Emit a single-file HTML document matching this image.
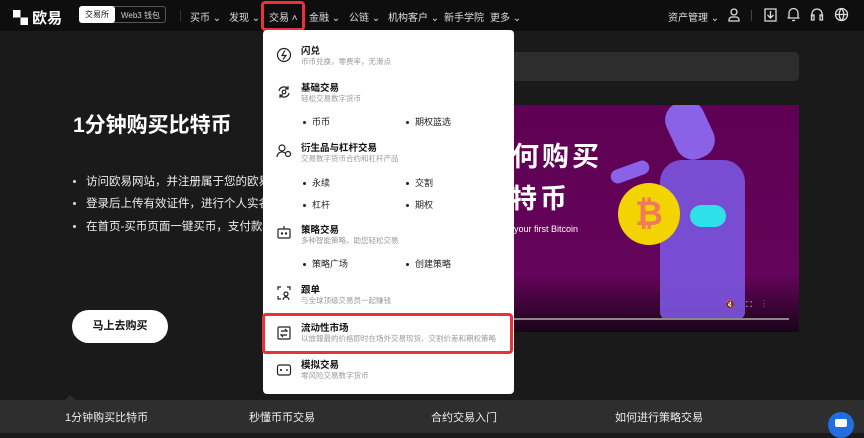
<!DOCTYPE html><html><head><meta charset="utf-8"><style>
*{margin:0;padding:0;box-sizing:border-box}
body{width:864px;height:433px;overflow:hidden;background:#1a1a1a;font-family:"Liberation Sans","Noto Sans CJK SC",sans-serif;color:#fff;position:relative}
.a{position:absolute;white-space:nowrap}
.hdr{position:absolute;left:0;top:0;width:864px;height:31px;background:#0e0e0e}
.nav{font-size:10px;color:#ddd;top:9px}
.dd{position:absolute;left:263px;top:30px;width:251px;height:364px;background:#fff;border-radius:4px}
.t{font-size:9.5px;color:#111;font-weight:bold;position:absolute;left:38px}
.s{font-size:7.5px;color:#999;position:absolute;left:38px}
.b{font-size:9px;color:#222;position:absolute}
.b:before{content:"";display:inline-block;width:3px;height:3px;border-radius:50%;background:#222;margin-right:6px;vertical-align:middle}
.ic{position:absolute;left:13px;width:16px;height:16px}
.li{font-size:11.5px;color:#eee;left:86px}
.dot{position:absolute;left:73px;width:3px;height:3px;border-radius:50%;background:#ddd}
</style></head><body>
<div class="hdr"></div>
<div class="a" style="left:13px;top:7px;font-size:15px;font-weight:bold">▚ 欧易</div>
<div class="a" style="left:79px;top:6px;width:87px;height:17px;border:1px solid #555;border-radius:3px"></div>
<div class="a" style="left:79px;top:6px;width:36px;height:17px;background:#fff;border-radius:3px;color:#111;font-size:8px;line-height:17px;text-align:center">交易所</div>
<div class="a" style="left:121px;top:10px;font-size:8px;color:#ccc">Web3 钱包</div>
<div class="a" style="left:180px;top:10px;width:1px;height:11px;background:#333"></div>
<div class="a nav" style="left:190px">买币 ⌄</div>
<div class="a nav" style="left:229px">发现 ⌄</div>
<div class="a nav" style="left:269px">交易 ˄</div>
<div class="a" style="left:261px;top:1px;width:44px;height:30px;border:3px solid #e8323c;border-radius:4px"></div>
<div class="a nav" style="left:309px">金融 ⌄</div>
<div class="a nav" style="left:349px">公链 ⌄</div>
<div class="a nav" style="left:388px">机构客户 ⌄</div>
<div class="a nav" style="left:444px">新手学院</div>
<div class="a nav" style="left:490px">更多 ⌄</div>
<div class="a nav" style="left:668px">资产管理 ⌄</div>
<svg class="a" style="left:727px;top:7px" width="14" height="16" viewBox="0 0 14 16" fill="none" stroke="#ddd" stroke-width="1.3"><circle cx="7" cy="5" r="3"/><path d="M2 14h10v-1a3 3 0 0 0-3-3H5a3 3 0 0 0-3 3z"/></svg>
<div class="a" style="left:751px;top:10px;width:1px;height:11px;background:#444"></div>
<svg class="a" style="left:764px;top:8px" width="13" height="14" viewBox="0 0 13 14" fill="none" stroke="#ddd" stroke-width="1.3"><path d="M1 1h11v12H1zM6.5 3v7M3.5 7l3 3 3-3"/></svg>
<svg class="a" style="left:787px;top:7px" width="13" height="15" viewBox="0 0 13 15" fill="none" stroke="#ddd" stroke-width="1.3"><path d="M2 11V6a4.5 4.5 0 0 1 9 0v5h1.5H.5zM5 13.5h3"/></svg>
<svg class="a" style="left:810px;top:7px" width="14" height="15" viewBox="0 0 14 15" fill="none" stroke="#ddd" stroke-width="1.3"><path d="M2 10V7a5 5 0 0 1 10 0v3M1.5 8h2.5v5H1.5zM10 8h2.5v5H10z"/></svg>
<svg class="a" style="left:834px;top:7px" width="15" height="15" viewBox="0 0 15 15" fill="none" stroke="#ddd" stroke-width="1.3"><circle cx="7.5" cy="7.5" r="6"/><path d="M1.5 7.5h12M7.5 1.5c-3 3-3 9 0 12M7.5 1.5c3 3 3 9 0 12"/></svg>

<div class="a" style="left:480px;top:52px;width:319px;height:29px;background:#2d2d2d;border-radius:5px"></div>
<div class="a" style="left:73px;top:109px;font-size:21px;font-weight:bold">1分钟购买比特币</div>
<div class="dot" style="top:180px"></div><div class="a li" style="top:173px">访问欧易网站，并注册属于您的欧易账户</div>
<div class="dot" style="top:202px"></div><div class="a li" style="top:195px">登录后上传有效证件，进行个人实名认证</div>
<div class="dot" style="top:225px"></div><div class="a li" style="top:218px">在首页-买币页面一键买币，支付款项</div>
<div class="a" style="left:72px;top:310px;width:96px;height:33px;background:#fff;border-radius:17px;color:#111;font-size:11px;font-weight:bold;line-height:33px;text-align:center">马上去购买</div>

<div class="a" style="left:500px;top:105px;width:299px;height:227px;background:linear-gradient(180deg,#5e0054 0%,#64045a 75%,#1a0418 100%);overflow:hidden">
<div class="a" style="left:-18px;top:30px;font-size:27px;font-weight:bold;letter-spacing:3px">如何购买</div>
<div class="a" style="left:-20px;top:72px;font-size:27px;font-weight:bold;letter-spacing:3px">比特币</div>
<div class="a" style="left:14px;top:119px;font-size:9px">your first Bitcoin</div>
<div class="a" style="left:170px;top:-5px;width:40px;height:60px;background:#8a62e8;border-radius:18px;transform:rotate(-25deg)"></div>
<div class="a" style="left:160px;top:55px;width:85px;height:160px;background:#7b55e0;border-radius:22px 22px 8px 8px;opacity:.9"></div>
<div class="a" style="left:110px;top:60px;width:40px;height:14px;background:#8a62e8;border-radius:7px;transform:rotate(-20deg)"></div>
<div class="a" style="left:118px;top:78px;width:62px;height:62px;border-radius:50%;background:#f4d400;color:#f07a5a;font-size:34px;font-weight:bold;text-align:center;line-height:62px">₿</div>
<div class="a" style="left:190px;top:100px;width:36px;height:22px;background:#2ee0e8;border-radius:11px"></div>
<div class="a" style="left:225px;top:195px;font-size:8px;color:#ddd">🔇 &nbsp;&nbsp;&nbsp; ⛶ &nbsp;&nbsp;&nbsp; ⋮</div>
<div class="a" style="left:0;top:213px;width:289px;height:2px;background:#888"></div>
</div>

<div class="dd">
<svg class="ic" style="top:17px" viewBox="0 0 16 16" fill="none" stroke="#222" stroke-width="1.2"><circle cx="8" cy="8" r="6.5"/><path d="M9 3.5 6 8.5h4L7 12.5"/></svg>
<div class="t" style="top:13px">闪兑</div><div class="s" style="top:26px">币币兑换，零费率，无滑点</div>
<svg class="ic" style="top:54px" viewBox="0 0 16 16" fill="none" stroke="#222" stroke-width="1.2"><path d="M3 7a5 5 0 0 1 9-2M13 9a5 5 0 0 1-9 2M12 2v3h-3M4 14v-3h3"/><circle cx="8" cy="8" r="1.8"/></svg>
<div class="t" style="top:50px">基础交易</div><div class="s" style="top:63px">轻松交易数字货币</div>
<div class="b" style="left:40px;top:85px">币币</div><div class="b" style="left:143px;top:85px">期权篮选</div>
<svg class="ic" style="top:113px" viewBox="0 0 16 16" fill="none" stroke="#222" stroke-width="1.2"><circle cx="6" cy="5" r="3"/><path d="M1 14a5 5 0 0 1 8-4"/><circle cx="12" cy="11" r="2.5"/></svg>
<div class="t" style="top:110px">衍生品与杠杆交易</div><div class="s" style="top:123px">交易数字货币合约和杠杆产品</div>
<div class="b" style="left:40px;top:146px">永续</div><div class="b" style="left:143px;top:146px">交割</div>
<div class="b" style="left:40px;top:168px">杠杆</div><div class="b" style="left:143px;top:168px">期权</div>
<svg class="ic" style="top:194px" viewBox="0 0 16 16" fill="none" stroke="#222" stroke-width="1.2"><rect x="2" y="5" width="12" height="9" rx="1"/><path d="M8 5V2"/><circle cx="6" cy="9.5" r=".6"/><circle cx="10" cy="9.5" r=".6"/></svg>
<div class="t" style="top:192px">策略交易</div><div class="s" style="top:205px">多种智能策略，助您轻松交易</div>
<div class="b" style="left:40px;top:227px">策略广场</div><div class="b" style="left:143px;top:227px">创建策略</div>
<svg class="ic" style="top:255px" viewBox="0 0 16 16" fill="none" stroke="#222" stroke-width="1.2"><path d="M2 5V2h3M11 2h3v3M2 11v3h3"/><circle cx="10" cy="9" r="2"/><path d="M7 15a3 3 0 0 1 6 0"/></svg>
<div class="t" style="top:252px">跟单</div><div class="s" style="top:265px">与全球顶级交易员一起赚钱</div>
<div class="a" style="left:-1px;top:283px;width:251px;height:41px;border:3px solid #e8323c;border-radius:4px"></div>
<svg class="ic" style="top:295px" viewBox="0 0 16 16" fill="none" stroke="#222" stroke-width="1.2"><rect x="2" y="2" width="12" height="12" rx="1"/><path d="M5 6h6l-2-2M11 10H5l2 2"/></svg>
<div class="t" style="top:290px">流动性市场</div><div class="s" style="top:303px">以放報最的价格即时在场外交易现货、交割价差和期权策略</div>
<svg class="ic" style="top:332px" viewBox="0 0 16 16" fill="none" stroke="#222" stroke-width="1.2"><rect x="1.5" y="3" width="13" height="10" rx="2"/><path d="M5 7v2M4 8h2M10 8h2"/></svg>
<div class="t" style="top:327px">模拟交易</div><div class="s" style="top:340px">零风险交易数字货币</div>
</div>

<div class="a" style="left:0;top:400px;width:864px;height:33px;background:#2e2e2e"></div>
<div class="a" style="left:64px;top:395px;width:0;height:0;border-left:6px solid transparent;border-right:6px solid transparent;border-bottom:6px solid #2e2e2e"></div>
<div class="a" style="left:65px;top:409px;font-size:11px;color:#eee">1分钟购买比特币</div>
<div class="a" style="left:249px;top:409px;font-size:11px;color:#eee">秒懂币币交易</div>
<div class="a" style="left:431px;top:409px;font-size:11px;color:#eee">合约交易入门</div>
<div class="a" style="left:615px;top:409px;font-size:11px;color:#eee">如何进行策略交易</div>
<div class="a" style="left:828px;top:412px;width:26px;height:26px;border-radius:50%;background:#1f6fe0"></div>
<div class="a" style="left:835px;top:419px;width:12px;height:8px;background:#fff;border-radius:2px"></div>
</body></html>
